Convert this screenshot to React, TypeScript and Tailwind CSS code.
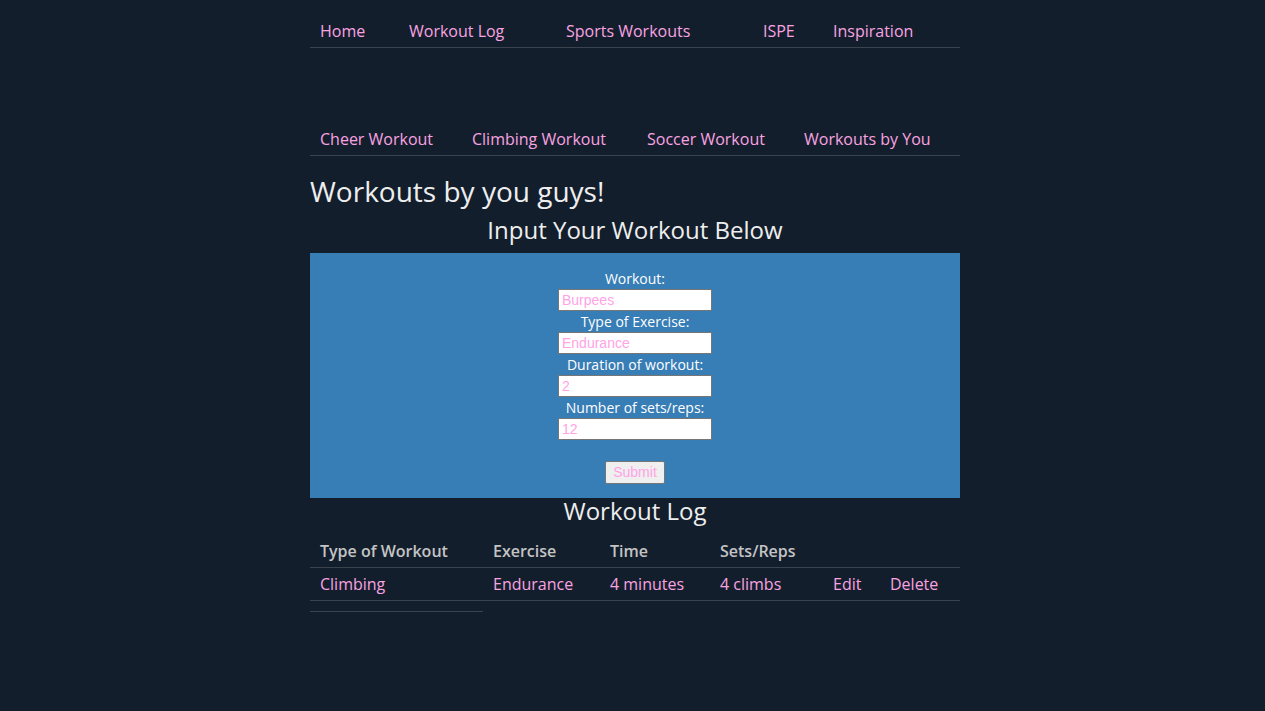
import { useState } from 'react'

const TOP_LINKS = [
  { name: 'Home', width: 'w-[89px]' },
  { name: 'Workout Log', width: 'w-[157px]' },
  { name: 'Sports Workouts', width: 'w-[197px]' },
  { name: 'ISPE', width: 'w-[70px]' },
  { name: 'Inspiration', width: 'flex-1' },
]

const SPORT_LINKS = [
  { name: 'Cheer Workout', width: 'w-[152px]' },
  { name: 'Climbing Workout', width: 'w-[175px]' },
  { name: 'Soccer Workout', width: 'w-[157px]' },
  { name: 'Workouts by You', width: 'flex-1' },
]

const FIELDS = [
  { label: 'Workout:', value: 'Burpees' },
  { label: 'Type of Exercise:', value: 'Endurance' },
  { label: 'Duration of workout:', value: '2' },
  { label: 'Number of sets/reps:', value: '12' },
]

// column widths for the log table
const COLS = ['w-[173px]', 'w-[117px]', 'w-[110px]', 'w-[113px]', 'w-[57px]', 'flex-1']

function NavRow({ links }: { links: Array<{ name: string; width: string }> }) {
  return (
    <div className="flex border-b border-[#3b434e]">
      {links.map((link) => (
        <a key={link.name} href="#" className={`${link.width} px-[10px] py-[4px] leading-[24px] text-[16px] text-[#f9a3e0]`}>
          {link.name}
        </a>
      ))}
    </div>
  )
}

export default function App() {
  const [log] = useState([
    { type: 'Climbing', exercise: 'Endurance', time: '4 minutes', sets: '4 climbs' },
  ])

  return (
    <div className="min-h-[711px] bg-[#131e2d] pl-[5px] font-['Open_Sans',sans-serif] text-white">
      <div className="mx-auto w-[650px] pt-[15px]">
        <NavRow links={TOP_LINKS} />
        <div className="mt-[75px]">
          <NavRow links={SPORT_LINKS} />
        </div>

        <h1 className="mt-[17px] text-[28px] leading-[36px] text-[#eeeeee]">Workouts by you guys!</h1>
        <h2 className="mt-[5px] text-center text-[24px] leading-[32px] text-[#eeeeee]">Input Your Workout Below</h2>

        <form className="mt-[7px] flex flex-col items-center bg-[#377db6] pt-[15px] pb-[14px]" onSubmit={(e) => e.preventDefault()}>
          {FIELDS.map((field) => (
            <div key={field.label} className="flex flex-col items-center">
              <label className="text-[14px] leading-[21px] text-white">{field.label}</label>
              <input
                defaultValue={field.value}
                className="h-[22px] w-[154px] border border-[#767676] bg-white px-[3px] font-['Liberation_Sans',Arial,sans-serif] text-[14px] text-[#ffa3e6] outline-none"
              />
            </div>
          ))}
          <button
            type="submit"
            className="mt-[21px] h-[23px] w-[60px] rounded-[2px] border border-[#767676] bg-[#efefef] font-['Liberation_Sans',Arial,sans-serif] text-[14px] text-[#ffa3e6]"
          >
            Submit
          </button>
        </form>

        <h2 className="text-center text-[24px] leading-[26px] text-[#eeeeee]">Workout Log</h2>

        <div className="mt-[11px] text-[16px]">
          <div className="flex border-b border-[#3b434e] font-semibold text-[#c4c4c4]">
            {['Type of Workout', 'Exercise', 'Time', 'Sets/Reps', '', ''].map((h, i) => (
              <div key={i} className={`${COLS[i]} px-[10px] py-[4px] leading-[24px]`}>{h}</div>
            ))}
          </div>
          {log.map((row) => (
            <div key={row.type} className="flex border-b border-[#3b434e] text-[#f9a3e0]">
              {[row.type, row.exercise, row.time, row.sets, 'Edit', 'Delete'].map((cell, i) => (
                <div key={i} className={`${COLS[i]} px-[10px] py-[4px] leading-[24px]`}>{cell}</div>
              ))}
            </div>
          ))}
          <div className="mt-[10px] w-[173px] border-t border-[#3b434e]" />
        </div>
      </div>
    </div>
  )
}
